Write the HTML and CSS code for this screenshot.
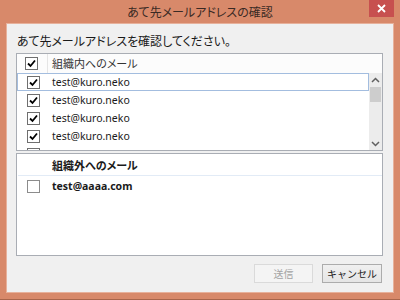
FILE: index.html
```html
<!DOCTYPE html>
<html lang="ja">
<head>
  <meta charset="UTF-8" />
  <title>あて先メールアドレスの確認</title>
  <link rel="stylesheet" href="styles.css">
</head>
<body>
  <div class="window">
    <div class="titlebar">
      <span></span>
      <span class="title">あて先メールアドレスの確認</span>
      <div class="title-buttons">
        <button type="button" class="close-button">
          <svg width="9" height="9" viewBox="0 0 9 9"><path d="M1 1 L8 8 M8 1 L1 8" stroke="#fff" stroke-width="1.8" /></svg>
        </button>
      </div>
    </div>

    <div class="client">
      <p class="prompt">あて先メールアドレスを確認してください。</p>

      <!-- 組織内 -->
      <div class="listbox inner-list">
        <div class="list-head">
          <div class="head-check">
            <span class="checkbox">
              <svg width="11" height="11" viewBox="0 0 11 11"><path d="M2 5.5 L4.5 8 L9 2.5" fill="none" stroke="#000" stroke-width="1.8" /></svg>
            </span>
          </div>
          <div class="head-text">組織内へのメール</div>
        </div>
        <div class="list-body">
          <ul class="rows">
            <li class="row focused"><span class="row-check"><span class="checkbox"><svg width="11" height="11" viewBox="0 0 11 11"><path d="M2 5.5 L4.5 8 L9 2.5" fill="none" stroke="#000" stroke-width="1.8" /></svg></span></span><span class="row-text">test@kuro.neko</span></li>
            <li class="row"><span class="row-check"><span class="checkbox"><svg width="11" height="11" viewBox="0 0 11 11"><path d="M2 5.5 L4.5 8 L9 2.5" fill="none" stroke="#000" stroke-width="1.8" /></svg></span></span><span class="row-text">test@kuro.neko</span></li>
            <li class="row"><span class="row-check"><span class="checkbox"><svg width="11" height="11" viewBox="0 0 11 11"><path d="M2 5.5 L4.5 8 L9 2.5" fill="none" stroke="#000" stroke-width="1.8" /></svg></span></span><span class="row-text">test@kuro.neko</span></li>
            <li class="row"><span class="row-check"><span class="checkbox"><svg width="11" height="11" viewBox="0 0 11 11"><path d="M2 5.5 L4.5 8 L9 2.5" fill="none" stroke="#000" stroke-width="1.8" /></svg></span></span><span class="row-text">test@kuro.neko</span></li>
            <!-- スクロールで隠れている行 -->
            <li class="row"><span class="row-check"><span class="checkbox"></span></span></li>
          </ul>
          <div class="scrollbar">
            <div class="scroll-arrow">
              <svg width="9" height="6" viewBox="0 0 9 6"><path d="M1 5 L4.5 1.5 L8 5" fill="none" stroke="#606060" stroke-width="1.5" /></svg>
            </div>
            <div class="scroll-thumb"></div>
            <div class="scroll-track"></div>
            <div class="scroll-arrow">
              <svg width="9" height="6" viewBox="0 0 9 6"><path d="M1 1 L4.5 4.5 L8 1" fill="none" stroke="#606060" stroke-width="1.5" /></svg>
            </div>
          </div>
        </div>
      </div>

      <!-- 組織外 -->
      <div class="listbox outer-list">
        <div class="group-head">組織外へのメール</div>
        <ul class="rows">
          <li class="row bold"><span class="row-check"><span class="checkbox empty"></span></span><span class="row-text">test@aaaa.com</span></li>
        </ul>
      </div>

      <div class="buttons">
        <button type="button" class="btn" disabled>送信</button>
        <button type="button" class="btn">キャンセル</button>
      </div>
    </div>
  </div>
</body>
</html>
```

FILE: styles.css
```css
body {
  margin: 0;
  font-family: "Noto Sans", "Noto Sans CJK JP", sans-serif;
  font-feature-settings: "palt";
  color: #1e1e1e;
}

.window {
  width: 400px;
  height: 300px;
  box-sizing: border-box;
  background-color: #d8896a;
  border-bottom: 1px solid #a8654b;
  display: flex;
  flex-direction: column;
}

.titlebar {
  height: 23px;
  display: grid;
  grid-template-columns: 1fr auto 1fr;
  align-items: start;
}

.title {
  font-size: 12px;
  line-height: 16px;
  padding-top: 5px;
  color: #3a2a24;
}

.title-buttons {
  display: flex;
  justify-content: flex-end;
}

.close-button {
  width: 25px;
  height: 17px;
  margin-right: 6px;
  padding: 0;
  border: none;
  background-color: #c7504f;
  display: flex;
  align-items: center;
  justify-content: center;
}

.client {
  height: 270px;
  margin: 0 6px;
  box-sizing: border-box;
  border: 1px solid #e7b19b;
  background-color: #f0f0f0;
  display: flex;
  flex-direction: column;
}

.prompt {
  margin: 0;
  padding: 10px 0 3px 10px;
  font-size: 12px;
  line-height: 16px;
  color: #1a1a1a;
}

.listbox {
  margin: 0 10px 0 9px;
  background-color: #fff;
  border: 1px solid #a9adb4;
  box-sizing: border-box;
  overflow: hidden;
}

.inner-list {
  height: 98px;
  display: flex;
  flex-direction: column;
}

.outer-list {
  height: 103px;
  margin-top: 2px;
}

.list-head {
  height: 19px;
  display: flex;
  background-color: #fcfcfc;
}

.head-check {
  width: 31px;
  border-right: 1px solid #e5e5e5;
  display: flex;
  align-items: center;
  padding-left: 8px;
  box-sizing: border-box;
}

.head-text {
  padding-left: 4px;
  font-size: 11px;
  line-height: 19px;
  color: #333;
}

.list-body {
  flex: 1;
  display: flex;
  min-height: 0;
}

.rows {
  list-style: none;
  margin: 0;
  padding: 0;
  flex: 1;
  overflow: hidden;
}

.row {
  height: 18px;
  display: flex;
  align-items: center;
  box-sizing: border-box;
  border: 1px solid transparent;
}

.row.focused {
  border-color: #a3bddf;
}

.row-check {
  width: 34px;
  padding-left: 9px;
  box-sizing: border-box;
  display: flex;
}

.row-text {
  font-size: 10.5px;
  color: #1a1a1a;
}

.row.bold .row-text {
  font-weight: bold;
}

.checkbox {
  width: 11px;
  height: 11px;
  border: 1px solid #6f6f6f;
  background-color: #fff;
  display: flex;
}

.checkbox.empty {
  border-color: #8c8c8c;
}

.scrollbar {
  width: 13px;
  background-color: #ececec;
  display: flex;
  flex-direction: column;
}

.scroll-arrow {
  height: 13px;
  display: flex;
  align-items: center;
  justify-content: center;
}

.scroll-thumb {
  height: 15px;
  margin: 1px 1px 0 1px;
  background-color: #cdcdcd;
}

.scroll-track {
  flex: 1;
}

.group-head {
  height: 22px;
  margin-left: 1px;
  padding: 2px 0 0 34px;
  box-sizing: border-box;
  font-size: 11px;
  font-weight: bold;
  line-height: 20px;
  border-bottom: 1px solid #e2ebf6;
  color: #1a1a1a;
}

.outer-list .row {
  margin-top: 1px;
}

.buttons {
  display: flex;
  justify-content: flex-end;
  gap: 9px;
  margin-top: 8px;
  padding-right: 11px;
}

.btn {
  width: 60px;
  height: 19px;
  padding: 0;
  font-family: inherit;
  font-size: 10px;
  color: #1a1a1a;
  background: linear-gradient(#f0f0f0, #e5e5e5);
  border: 1px solid #acacac;
}

.btn:disabled {
  width: 59px;
  color: #a3a3a3;
  background: #f4f4f4;
  border-color: #dadada;
}
```
